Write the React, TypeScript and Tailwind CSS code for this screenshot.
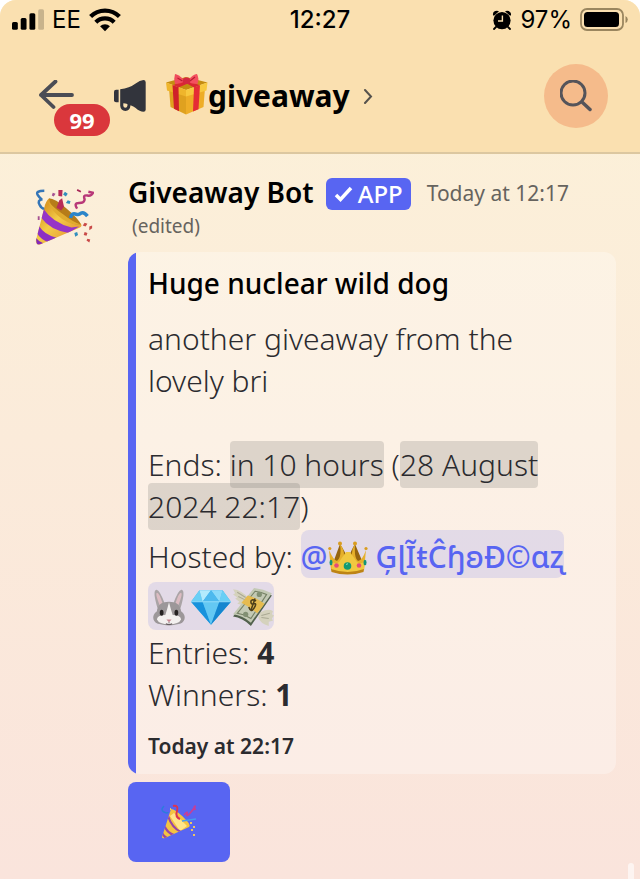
import type { ReactNode } from "react";

type IconProps = { className?: string };

function SignalIcon({ className }: IconProps) {
  return (
    <svg className={className} viewBox="0 0 33 22" fill="#000" aria-hidden="true">
      <rect x="0" y="13" width="6" height="8" rx="1.6" />
      <rect x="9" y="9" width="6" height="12" rx="1.6" />
      <rect x="18" y="4" width="6" height="17" rx="1.6" />
      <rect x="27" y="0" width="6" height="21" rx="1.6" opacity="0.2" />
    </svg>
  );
}

function WifiIcon({ className }: IconProps) {
  return (
    <svg className={className} viewBox="0 0 30 22" fill="none" stroke="#000" strokeWidth="4" aria-hidden="true">
      <path d="M1.500 7.800a19 19 0 0 1 27 0" />
      <path d="M6.400 13a12.100 12.100 0 0 1 17.200 0" />
      <path d="M15 21.600l-4.600-4.700a6.400 6.400 0 0 1 9.200 0z" fill="#000" stroke="none" />
    </svg>
  );
}

function AlarmIcon({ className }: IconProps) {
  return (
    <svg className={className} viewBox="0 0 20 20" aria-hidden="true">
      <circle cx="10" cy="10.600" r="8.600" fill="#000" />
      <path d="M1 5.200Q.5 1 5 .8l2 .5-5 4.500zM19 5.200Q19.500 1 15 .8l-2 .5 5 4.500z" fill="#000" />
      <path d="M4 17l-2 2M16 17l2 2" stroke="#000" strokeWidth="1.800" strokeLinecap="round" />
      <path d="M10.400 5.500v5.500H6" stroke="#fae0b0" strokeWidth="1.400" fill="none" />
    </svg>
  );
}

function BatteryIcon({ className }: IconProps) {
  return (
    <svg className={className} viewBox="0 0 48 24" aria-hidden="true">
      <rect x="1" y="1" width="42" height="21" rx="6" fill="none" stroke="#9a865f" strokeWidth="1.800" />
      <rect x="4" y="4" width="35" height="15" rx="3.500" fill="#000" />
      <path d="M45.500 8v7q2.300-1.200 2.300-3.500T45.500 8z" fill="#9a865f" />
    </svg>
  );
}

function ArrowIcon({ className }: IconProps) {
  return (
    <svg className={className} viewBox="0 0 36 32" fill="none" stroke="#4b4d55" strokeWidth="3.800" strokeLinecap="round" strokeLinejoin="round" aria-hidden="true">
      <path d="M17.500 1.500L3 15l12.500 12M3 15h31" />
    </svg>
  );
}

function MegaphoneIcon({ className }: IconProps) {
  return (
    <svg className={className} viewBox="0 0 31 31" fill="#32343c" aria-hidden="true">
      <path d="M0 11.500Q0 9.500 2 9.500h2.500v12H2Q0 21.500 0 19.500z" />
      <path d="M6 9Q15 8 21 3.500q4-3.300 7.500-3.500 2.200 0 2.200 2.200v26.600q0 2-2.200 2-3.500 0-7.500-3.600-2-1.700-5-2.700-.5 5.500-5 5.500T6 25z" />
      <path d="M9 22.500V25q.3 1.800 2 1.800T13 25v-1.800q-2-.6-4-.7z" fill="#fae0b0" />
    </svg>
  );
}

function GiftEmoji({ className }: IconProps) {
  return (
    <svg className={className} viewBox="0 0 42 42" role="img" aria-label="gift">
      <path d="M3 15l17 6v20.500L4.500 34z" fill="#dfa11f" />
      <path d="M20 21l19-6-1.500 19L20 41.500z" fill="#eead27" />
      <path d="M0 9.500L20 4l21.500 5.500L20 17z" fill="#c58c10" />
      <path d="M0 9.500L20 17v6.500L1 17.500z" fill="#efb52c" />
      <path d="M41.500 9.500L20 17v6.500l20.500-6z" fill="#f8c83f" />
      <path d="M6.500 12l6 2.200.500 24-5-2.500z" fill="#cf2029" />
      <path d="M28 14.200l6-2-1.500 24-5.500 2.300z" fill="#e52c35" />
      <path d="M7 12L19 8l4 2-10.500 4.500zM34 12.200L22 8l-3 1.500 9 5z" fill="#d92732" />
      <path d="M18.500 7Q12 1 9 1q-1.500 4.500 0 10 6-.5 10-2.500z" fill="#f04c5c" />
      <path d="M22 7Q28 .500 31 1q2.500 4.500.5 10-6 0-10-2.500z" fill="#f4505f" />
      <path d="M11.500 5l5 3M29 4l-5 4" stroke="#b91d31" strokeWidth="1.200" />
      <rect x="17" y="4.500" width="7" height="6.500" rx="2.500" fill="#d42740" />
    </svg>
  );
}

function PartyEmoji({ className }: IconProps) {
  return (
    <svg className={className} viewBox="0 0 64 64" role="img" aria-label="party popper">
      <defs>
        <linearGradient id="cone" x1="0.200" y1="0.300" x2="0.600" y2="0.700">
          <stop offset="0" stopColor="#dc9a26" />
          <stop offset="0.500" stopColor="#f3cc48" />
          <stop offset="1" stopColor="#eaa83a" />
        </linearGradient>
        <clipPath id="cone-clip">
          <path d="M16 11Q12 15 11 21L2 56q-.5 4 4 4.500L49 42q3-1 1-4z" />
        </clipPath>
      </defs>
      <g clipPath="url(#cone-clip)">
        <path d="M0 0h64v64H0z" fill="url(#cone)" />
        <path d="M10 22Q20 37 40 42l8-1-11 7Q17 45 7 31z" fill="#9635c8" />
        <path d="M5 40q6 10 19 13l-8 5Q7 55 3 48z" fill="#8c30c4" />
        <path d="M2 53q3 4 8 6l-7 2z" fill="#8429b8" />
      </g>
      <path d="M16 11q6 0 19 11t15 17q-9 1-21-9T16 11z" fill="#b67c19" />
      <path d="M15 14q4 11 15 19 11 7 20 6-9-3-19-11-10-7-16-14z" fill="#e0ab2f" />
      <path d="M26 2h4.500l-.500 7-4-.5zM27 13l3-2 2 9-3 4-5-3z" fill="#b82c58" />
      <path d="M11 3Q1 3 4 7.500t5 4.500q-6 1-3 6 2 4 5 4" fill="none" stroke="#3475b7" strokeWidth="2.600" />
      <path d="M39 32q1-6 6-4 3 1 5-1 3-2 7 3" fill="none" stroke="#2b85c9" strokeWidth="3.800" />
      <path d="M46 22q-4-6 2-6t6-4q-2-5 3-4 4 1 6-3l-5-1" fill="none" stroke="#b83878" strokeWidth="2.600" />
      <path d="M46 2l4 2" stroke="#a82958" strokeWidth="1.800" />
      <path d="M33 4l3 2-2 3-3-2zM36 13l3 1-1 3-4-1zM43 48l3-1 1 3-3 2z" fill="#328fbd" />
      <path d="M20 5l3 1-2 3-2-1zM4 30h2v4H4z" fill="#a65292" />
      <path d="M54 37l3 1-2 3-3-1zM59 41l3-1v3l-3 2zM54 47l3 1-1 3-3-1zM57 54l3 1-1 3-3-2z" fill="#c94a48" />
    </svg>
  );
}

function PopperEmoji({ className }: IconProps) {
  return (
    <svg className={className} viewBox="0 0 36 36" role="img" aria-label="party popper">
      <defs>
        <clipPath id="popper-clip">
          <path d="M10 5L1 33q0 2 3 1l24-11q2-2-2-6Q15 5 10 5z" />
        </clipPath>
      </defs>
      <g clipPath="url(#popper-clip)">
        <path d="M0 0h36v36H0z" fill="#f4c441" />
        <path d="M13 9l13 13-7 5L9 12z" fill="#ffe58a" />
        <path d="M7 12q4 12 13 16M3 21q3 8 10 10M1 29q2 4 5 5" fill="none" stroke="#9847a5" strokeWidth="2.200" />
      </g>
      <path d="M3 2q-4 4 0 6t4 0" fill="none" stroke="#2d7bdd" strokeWidth="1.500" />
      <path d="M12 2q6-1 4 5t3 8" fill="none" stroke="#db3552" strokeWidth="2" />
      <path d="M23 11q4-5 3-1t4-2 4-6-1 2 2 1" fill="none" stroke="#c73e96" strokeWidth="1.600" />
      <path d="M21 17l14-2" stroke="#459ded" strokeWidth="1.500" />
      <path d="M9 5h1M29 19h2M32 23h2M30 26h2M32 31h2" stroke="#edc564" strokeWidth="2" />
    </svg>
  );
}

function CrownEmoji({ className }: IconProps) {
  return (
    <svg className={className} viewBox="0 0 40 34" role="img" aria-label="crown">
      <path d="M5 22L12 3q6 9 8 16Q23 9 27 3l8 19z" fill="#96650f" />
      <path d="M3 29L1 9q5 11 8 11 5-4 3-17 6 8 3 16l4-8h3l3 8q-3-8 2-16-1 14 3 17 4 0 8-11l-2 20q-15 7-33 0z" fill="#e6b02b" />
      <path d="M3 20q4 4 8 1l7-10h4l7 10q4 3 8-1l-1 9q-16 6-32 0z" fill="#f1c840" />
      <path d="M3 28q17 6 33 0l-.5 3q-16 5-32 0z" fill="#bd8315" />
      <g fill="#d99d20">
        <circle cx="1.800" cy="7.500" r="1.600" />
        <circle cx="12" cy="2.500" r="2" />
        <circle cx="27" cy="2.500" r="2" />
        <circle cx="38" cy="7.500" r="1.600" />
      </g>
      <circle cx="19.500" cy="25" r="3.800" fill="#159a73" />
      <circle cx="8.500" cy="24.500" r="2.300" fill="#e44b78" />
      <circle cx="31" cy="24.500" r="2.300" fill="#e44b78" />
      <ellipse cx="3" cy="21.500" rx="1.500" ry="2.800" fill="#139477" />
      <ellipse cx="37" cy="21.500" rx="1.500" ry="2.800" fill="#139477" />
      <path d="M18 23.500l2-.8" stroke="#8be1bd" />
    </svg>
  );
}

function RabbitEmoji({ className }: IconProps) {
  return (
    <svg className={className} viewBox="0 0 40 40" role="img" aria-label="rabbit">
      <path d="M9 21Q4 4 8 3.500q3-.5 8 13.500zM31 21Q36 4 32 3.500q-3-.5-8 13.500z" fill="#aaa4a6" />
      <path d="M11 18Q6.500 7 8.500 6.500T14 17zM29 18Q33.500 7 31.500 6.500T26 17z" fill="#dcbcc2" />
      <path d="M20 15c8 0 11 4 11.500 9 6 4 4 12-3.500 12.500q-3 1-8 1t-8-1C4.500 36 2.500 28 8.500 24c.5-5 3.500-9 11.500-9z" fill="#9c9799" />
      <path d="M20 15.500q1.500 6 3.500 12 8 0 8 4.500-2 4.500-11.500 4.500T8.500 32q0-4.500 8-4.500 2-6 3.500-12z" fill="#f3f0ef" />
      <ellipse cx="13" cy="25.500" rx="1.800" ry="2.800" fill="#262323" />
      <ellipse cx="27" cy="25.500" rx="1.800" ry="2.800" fill="#262323" />
      <path d="M17.500 32h5L20 34.500z" fill="#c98590" />
      <path d="M20 34.500v1m-3 .5q3 1.500 6 0" stroke="#665d60" fill="none" />
    </svg>
  );
}

function DiamondEmoji({ className }: IconProps) {
  return (
    <svg className={className} viewBox="0 0 40 40" role="img" aria-label="gem">
      <path d="M9 4h22l8 11-19 22L1 15z" fill="#3daeea" />
      <path d="M9 4l3 11H1zM31 4l-3 11h11z" fill="#69cff5" />
      <path d="M9 4h11l-8 11z" fill="#b3ebfd" />
      <path d="M20 4h11l-3 11z" fill="#8cdafa" />
      <path d="M20 4l-8 11h16z" fill="#4db9ee" />
      <path d="M1 15h11l8 22z" fill="#1792dc" />
      <path d="M12 15h16l-8 22z" fill="#63c8f3" />
      <path d="M28 15h11L20 37z" fill="#1486cf" />
      <path d="M1 15h38" stroke="#a0e3fb" strokeWidth="0.800" />
    </svg>
  );
}

function MoneyEmoji({ className }: IconProps) {
  return (
    <svg className={className} viewBox="0 0 40 40" role="img" aria-label="money with wings">
      <path d="M17 13Q9 3 1 3l2 4-2 1 4 3-2 1 4 3-2 2 8 2z" fill="#d5d2bd" />
      <path d="M27 25q8-4 12-1l-1 3 2 1-2 3 1 2-4 1v4q-8-2-10-8z" fill="#d5d2bd" />
      <path d="M1 29L21 3q9 1 17 6L18 38Q10 30 1 29z" fill="#53624e" />
      <path d="M1 27L21 2q9 1 17 5L18 35Q10 28 1 27z" fill="#c3c9b4" />
      <path d="M5 26L22 5q6 1 11 3L18 31Q12 27 5 26z" fill="none" stroke="#758064" />
      <path d="M9 16l6-7q8 2 16 8l-7 9Q17 20 9 16z" fill="#e6bb50" />
      <circle cx="26" cy="8" r="2.500" fill="#829073" />
      <circle cx="13" cy="27" r="2.500" fill="#829073" />
      <path d="M23 14q-5-2-5 1t3 2 0 4-5-1M22 12l-4 11" fill="none" stroke="#4d3f1a" strokeWidth="1.500" />
      <path d="M5 6l8 5M6 10l6 3M36 26l-8 2M35 31l-7-1" stroke="#aaa993" />
    </svg>
  );
}

function StatusBar() {
  return (
    <div className="flex h-10 items-center justify-between px-3 font-['Inter','Liberation_Sans',sans-serif] text-2xl text-black">
      <div className="flex flex-1 items-center gap-2">
        <SignalIcon className="h-6 w-8" />
        <span>EE</span>
        <WifiIcon className="h-6 w-8" />
      </div>
      <span className="font-medium">12:27</span>
      <div className="flex flex-1 items-center justify-end gap-2">
        <AlarmIcon className="size-5" />
        <span>97%</span>
        <BatteryIcon className="h-6 w-12" />
      </div>
    </div>
  );
}

function Header() {
  return (
    <header className="border-b-2 border-[#dcc7a0] bg-[#fae0b0]">
      <StatusBar />
      <div className="flex h-28 items-center pl-9 pr-8">
        <button type="button" aria-label="Back, 99 unread" className="relative flex w-[78px] items-center">
          <ArrowIcon className="h-8 w-10" />
          <span className="absolute left-[18px] top-6 flex h-8 w-14 items-center justify-center rounded-full bg-[#da373c] text-[22px] font-bold text-white">
            99
          </span>
        </button>
        <MegaphoneIcon className="size-8" />
        <h1 className="ml-4 min-w-0 flex-1">
          <button type="button" className="flex items-center text-[30px] font-bold leading-10 text-black">
            <GiftEmoji className="-mt-1 ml-1 size-[42px]" />
            giveaway
            <svg className="ml-3 h-4 w-3" viewBox="0 0 12 16" fill="none" stroke="#55524d" strokeWidth="2" strokeLinecap="round" aria-hidden="true">
              <path d="M3 2l6 6.500L3 15" />
            </svg>
          </button>
        </h1>
        <button type="button" aria-label="Search" className="flex size-16 items-center justify-center rounded-full bg-[#f5bb8b]">
          <svg className="size-8" viewBox="0 0 32 32" fill="none" stroke="#55545a" strokeWidth="3" strokeLinecap="round" aria-hidden="true">
            <circle cx="13" cy="13" r="12" />
            <path d="M22 22l8 7.500" strokeWidth="3.500" />
          </svg>
        </button>
      </div>
    </header>
  );
}

function Timestamp({ children, className = "" }: { children: ReactNode; className?: string }) {
  return <span className={`rounded bg-[#62625f]/20 py-[3px] ${className}`}>{children}</span>;
}

function Embed() {
  return (
    <article className="mt-2.5 flex overflow-hidden rounded-xl bg-white/30 text-[30px] leading-[42px] text-[#2b2b2f]">
      <div className="w-2 shrink-0 bg-[#5865f2]" />
      <div className="min-w-0 flex-1 px-3 pb-3 pt-2.5">
        <h2 className="text-[28px] font-medium text-black">Huge nuclear wild dog</h2>
        <div className="mt-3.5 font-light">
          <p>
            another giveaway from the
            <br />
            lovely bri
          </p>
          <p className="mt-[42px]">
            Ends: <Timestamp>in 10 hours</Timestamp> (<Timestamp>28 August</Timestamp>
            <br />
            <Timestamp>2024 22:17</Timestamp>)
          </p>
          <div className="mt-0.5 flex items-end">
            <span>Hosted by:&nbsp;</span>
            <a href="#host" className="flex h-12 items-end rounded-lg bg-[#5865f2]/15 font-medium text-[#5865f2]">
              @
              <CrownEmoji className="mb-0.5 mr-2 h-9 w-10" />
              ĢɭĨŧĈɧʚÐ©ɑʐ
            </a>
          </div>
          <a href="#host" className="mb-0.5 mt-1 flex h-12 w-fit items-end rounded-lg bg-[#5865f2]/15 pb-0.5">
            <RabbitEmoji className="size-[42px]" />
            <DiamondEmoji className="size-[42px]" />
            <MoneyEmoji className="size-[42px]" />
          </a>
          <p>
            Entries: <strong className="font-bold">4</strong>
          </p>
          <p>
            Winners: <strong className="font-bold">1</strong>
          </p>
        </div>
        <footer className="mt-3.5 text-[21px] font-semibold leading-8">Today at 22:17</footer>
      </div>
    </article>
  );
}

function Message() {
  return (
    <section className="flex gap-8 pl-8 pr-6 pt-5">
      <div className="mt-3 flex size-16 shrink-0 items-center justify-center">
        <PartyEmoji className="size-[60px]" />
      </div>
      <div className="min-w-0 flex-1">
        <div className="flex items-center">
          <span className="text-[28px] font-semibold leading-9 text-black">Giveaway Bot</span>
          <span className="ml-3 mt-1 flex h-8 items-center gap-1 rounded-md bg-[#5865f2] px-2 text-[24px] font-medium text-white">
            <svg className="size-5" viewBox="0 0 20 20" fill="none" stroke="#fff" strokeWidth="3.500" aria-hidden="true">
              <path d="M2 11l4.500 4.500L17 4" />
            </svg>
            APP
          </span>
          <time className="ml-4 mt-1 text-[21px] text-[#66635e]">Today at 12:17</time>
        </div>
        <div className="pl-1 text-[19px] leading-8 text-[#66635e]">(edited)</div>
        <Embed />
        <button type="button" aria-label="Enter giveaway" className="mt-2 flex h-20 w-[102px] items-center justify-center rounded-lg bg-[#5865f2]">
          <PopperEmoji className="size-9" />
        </button>
      </div>
    </section>
  );
}

export default function App() {
  return (
    <div className="bg-white">
      <main className="min-h-screen overflow-hidden rounded-t-2xl bg-linear-to-b from-[#fcf2d8] to-[#fae4dc] pb-4 font-['Noto_Sans','DejaVu_Sans',sans-serif]">
        <Header />
        <Message />
      </main>
      <div className="fixed bottom-0 right-1.5 h-4 w-1.5 rounded-t-full bg-white/60" />
    </div>
  );
}
